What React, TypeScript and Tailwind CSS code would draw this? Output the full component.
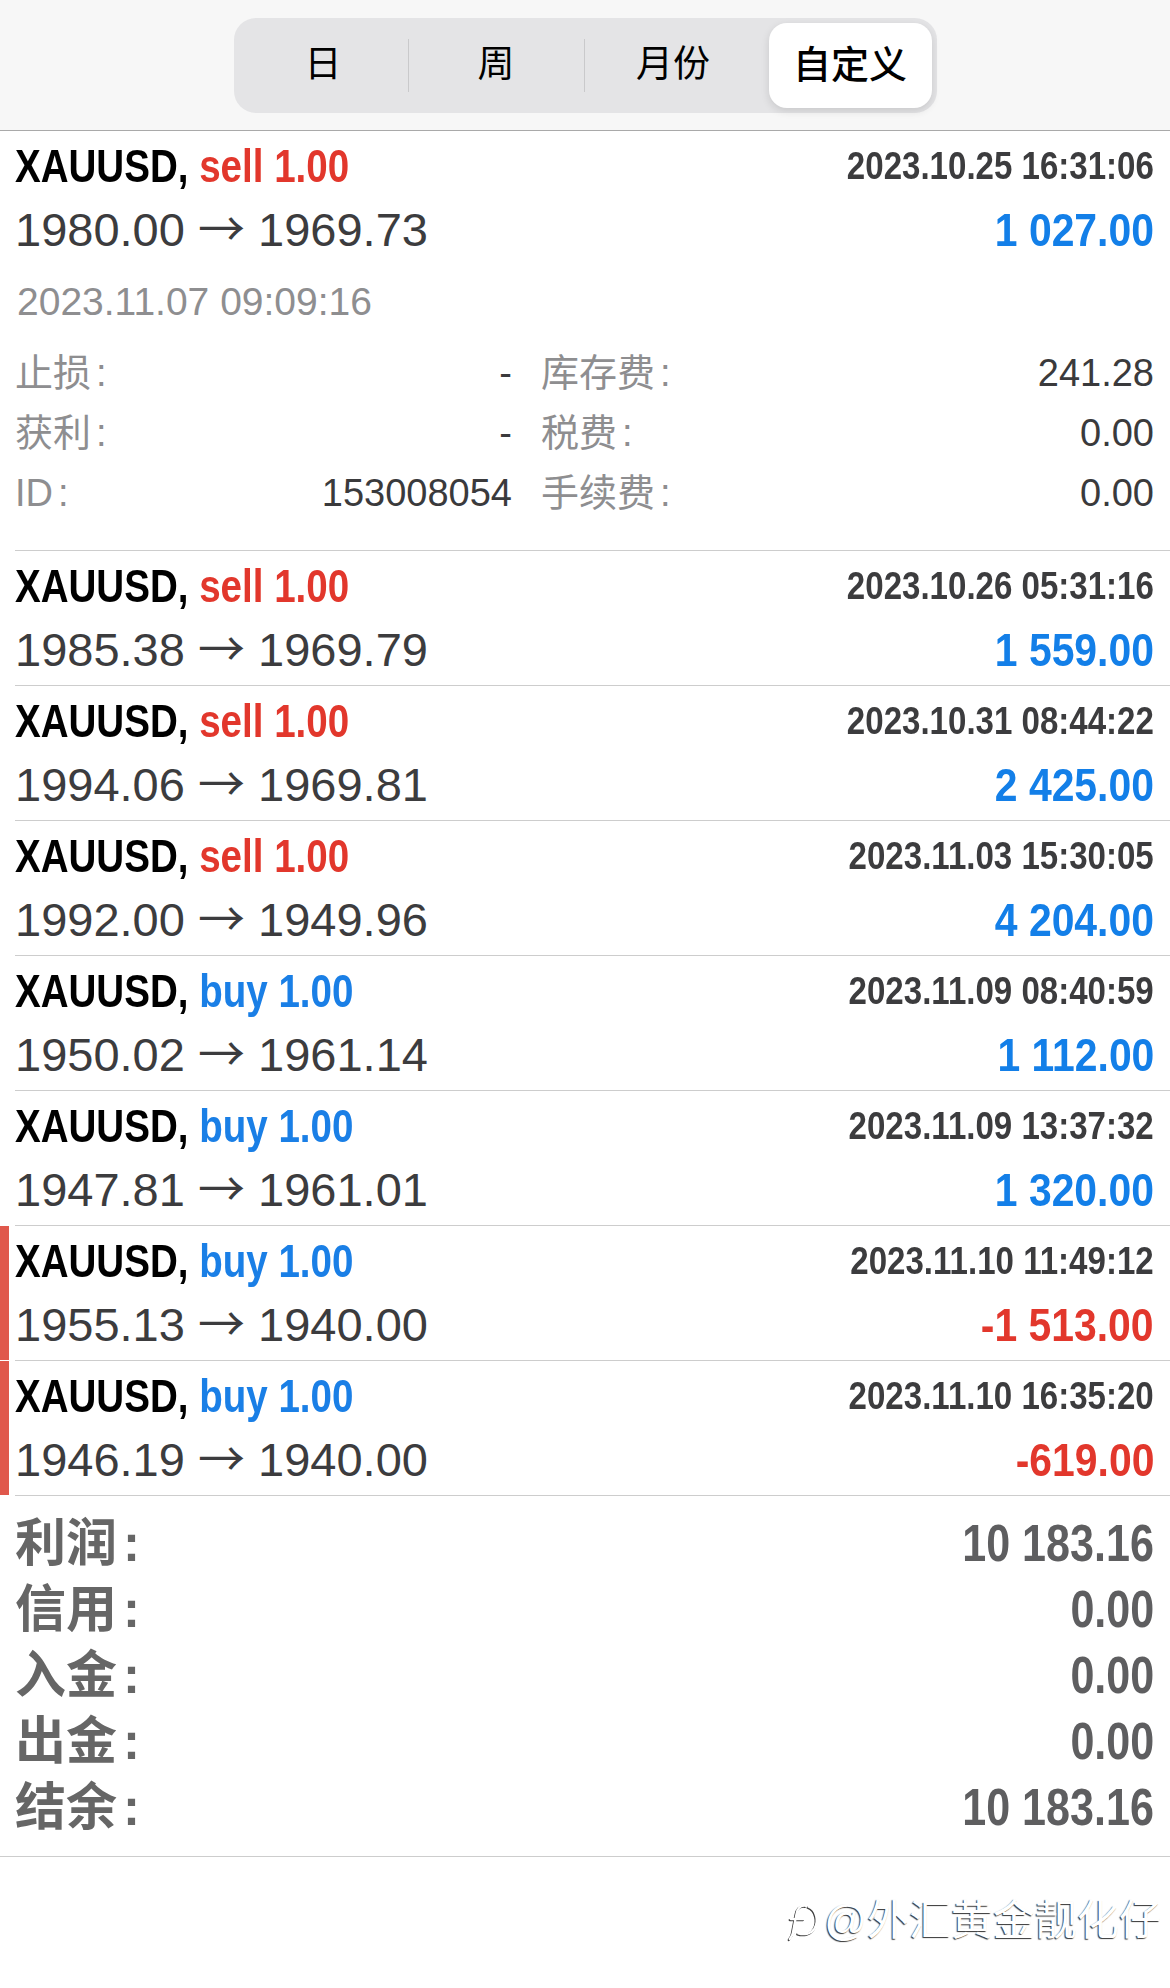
import React from "react";

type Trade = {
  side: "sell" | "buy";
  open: string;
  close: string;
  time: string;
  profit: string;
  loss?: boolean;
};

const trades: Trade[] = [
  { side: "sell", open: "1985.38", close: "1969.79", time: "2023.10.26 05:31:16", profit: "1 559.00" },
  { side: "sell", open: "1994.06", close: "1969.81", time: "2023.10.31 08:44:22", profit: "2 425.00" },
  { side: "sell", open: "1992.00", close: "1949.96", time: "2023.11.03 15:30:05", profit: "4 204.00" },
  { side: "buy", open: "1950.02", close: "1961.14", time: "2023.11.09 08:40:59", profit: "1 112.00" },
  { side: "buy", open: "1947.81", close: "1961.01", time: "2023.11.09 13:37:32", profit: "1 320.00" },
  { side: "buy", open: "1955.13", close: "1940.00", time: "2023.11.10 11:49:12", profit: "-1 513.00", loss: true },
  { side: "buy", open: "1946.19", close: "1940.00", time: "2023.11.10 16:35:20", profit: "-619.00", loss: true },
];

function Segmented() {
  return (
    <div className="flex h-[131px] items-center justify-center border-b border-[#a9a9a9] bg-[#f7f7f7]">
      <div className="flex h-[95px] w-[703px] items-stretch rounded-[22px] bg-[#e4e4e6] p-[5px] text-[37px] text-black">
        <div className="flex w-[169px] items-center justify-center">日</div>
        <div className="h-[53px] w-px self-center bg-[#c9c9cb]" />
        <div className="flex w-[175px] items-center justify-center">周</div>
        <div className="h-[53px] w-px self-center bg-[#c9c9cb]" />
        <div className="flex w-[177px] items-center justify-center">月份</div>
        <div className="w-[7px]" />
        <div className="flex w-[163px] items-center justify-center rounded-[18px] bg-white text-[38px] font-medium shadow-[0_3px_8px_rgba(0,0,0,0.12)]">
          自定义
        </div>
      </div>
    </div>
  );
}

function Title({ side }: { side: "sell" | "buy" }) {
  return (
    <span className="inline-block origin-left scale-x-[0.82] whitespace-nowrap text-[47px] font-bold leading-[64px]">
      <span className="text-black">XAUUSD,</span>{" "}
      <span className={side === "sell" ? "text-[#e2372c]" : "text-[#1a7fe6]"}>{side} 1.00</span>
    </span>
  );
}

function Time({ t }: { t: string }) {
  return (
    <span className="inline-block origin-right scale-x-[0.87] whitespace-nowrap text-[38px] font-bold leading-[64px] text-[#3c3c3e]">
      {t}
    </span>
  );
}

function Profit({ p, loss }: { p: string; loss?: boolean }) {
  return (
    <span
      className={
        "inline-block origin-right scale-x-[0.87] whitespace-nowrap text-[47px] font-bold leading-[64px] " +
        (loss ? "text-[#e2372c]" : "text-[#137fe8]")
      }
    >
      {p}
    </span>
  );
}

function Price({ a, b }: { a: string; b: string }) {
  return (
    <span className="whitespace-nowrap text-[47px] leading-[64px] text-[#3c3c3e]">
      {a} <span className="font-['Noto_Sans_CJK_SC',sans-serif] leading-none">→</span> {b}
    </span>
  );
}

function Gutter({ loss }: { loss?: boolean }) {
  return (
    <div className="w-[15px] shrink-0 pb-px">
      {loss && <div className="h-full w-[9px] bg-[#e0584c]" />}
    </div>
  );
}

function Detail({ label, value }: { label: string; value: string }) {
  return (
    <div className="flex justify-between whitespace-nowrap">
      <span className="text-[#8e8e90]">
        {label}
        <span className="ml-[5px]">:</span>
      </span>
      <span className="text-[#3a3a3c]">{value}</span>
    </div>
  );
}

function ExpandedRow() {
  return (
    <div className="flex">
      <Gutter />
      <div className="flex-1 border-b border-[#cdcdcd] pt-[3px] pr-4 pb-[27px]">
        <div className="flex h-16 justify-between">
          <Title side="sell" />
          <Time t="2023.10.25 16:31:06" />
        </div>
        <div className="flex h-16 justify-between">
          <Price a="1980.00" b="1969.73" />
          <Profit p="1 027.00" />
        </div>
        <div className="mt-[10px] pl-[2px] text-[39px] leading-[60px] text-[#8e8e90]">2023.11.07 09:09:16</div>
        <div className="mt-[11px] grid grid-cols-[497px_1fr] gap-x-[29px] text-[38px] leading-[60px]">
          <Detail label="止损" value="-" />
          <Detail label="库存费" value="241.28" />
          <Detail label="获利" value="-" />
          <Detail label="税费" value="0.00" />
          <Detail label="ID" value="153008054" />
          <Detail label="手续费" value="0.00" />
        </div>
      </div>
    </div>
  );
}

function TradeRow({ t }: { t: Trade }) {
  return (
    <div className="flex">
      <Gutter loss={t.loss} />
      <div className="flex-1 border-b border-[#cdcdcd] pt-[3px] pr-4 pb-[3px]">
        <div className="flex h-16 justify-between">
          <Title side={t.side} />
          <Time t={t.time} />
        </div>
        <div className="flex h-16 justify-between">
          <Price a={t.open} b={t.close} />
          <Profit p={t.profit} loss={t.loss} />
        </div>
      </div>
    </div>
  );
}

const summary: [string, string][] = [
  ["利润", "10 183.16"],
  ["信用", "0.00"],
  ["入金", "0.00"],
  ["出金", "0.00"],
  ["结余", "10 183.16"],
];

function Summary() {
  return (
    <div className="border-b border-[#cdcdcd] py-[15px] pl-[15px] pr-4">
      {summary.map(([l, v]) => (
        <div key={l} className="flex h-[66px] justify-between text-[51px] font-bold leading-[66px]">
          <span className="text-[#666666]">
            {l}
            <span className="ml-[6px]">:</span>
          </span>
          <span className="inline-block origin-right scale-x-[0.845] whitespace-nowrap text-[#5e5e60]">{v}</span>
        </div>
      ))}
    </div>
  );
}

function Watermark() {
  return (
    <div className="flex justify-end pt-[40px] pr-[9px]">
      <div className="flex items-center gap-[3px] text-[42px] leading-[48px] text-white [text-shadow:-1px_1px_1px_rgba(0,0,0,0.8)]">
        <svg width="36" height="44" viewBox="0 0 38 44" className="[filter:drop-shadow(-1px_1px_0.6px_rgba(0,0,0,0.75))]">
          <path
            d="M22 6 C 16 5, 13 9, 12 15 L 8 36 M 6 20 L 20 20"
            fill="none"
            stroke="white"
            strokeWidth="2.4"
            strokeLinecap="round"
          />
          <path
            d="M25 7 C 33 10, 36 22, 31 30 C 27 36, 20 37, 14 35 M 10 33 L 5 41"
            fill="none"
            stroke="white"
            strokeWidth="2.4"
            strokeLinecap="round"
          />
        </svg>
        <span>@外汇黄金靓化仔</span>
      </div>
    </div>
  );
}

export default function App() {
  return (
    <div className="min-h-[1988px] w-[1170px] bg-white font-['Liberation_Sans','Noto_Sans_CJK_SC',sans-serif]">
      <Segmented />
      <ExpandedRow />
      {trades.map((t, i) => (
        <TradeRow key={i} t={t} />
      ))}
      <Summary />
      <Watermark />
    </div>
  );
}
